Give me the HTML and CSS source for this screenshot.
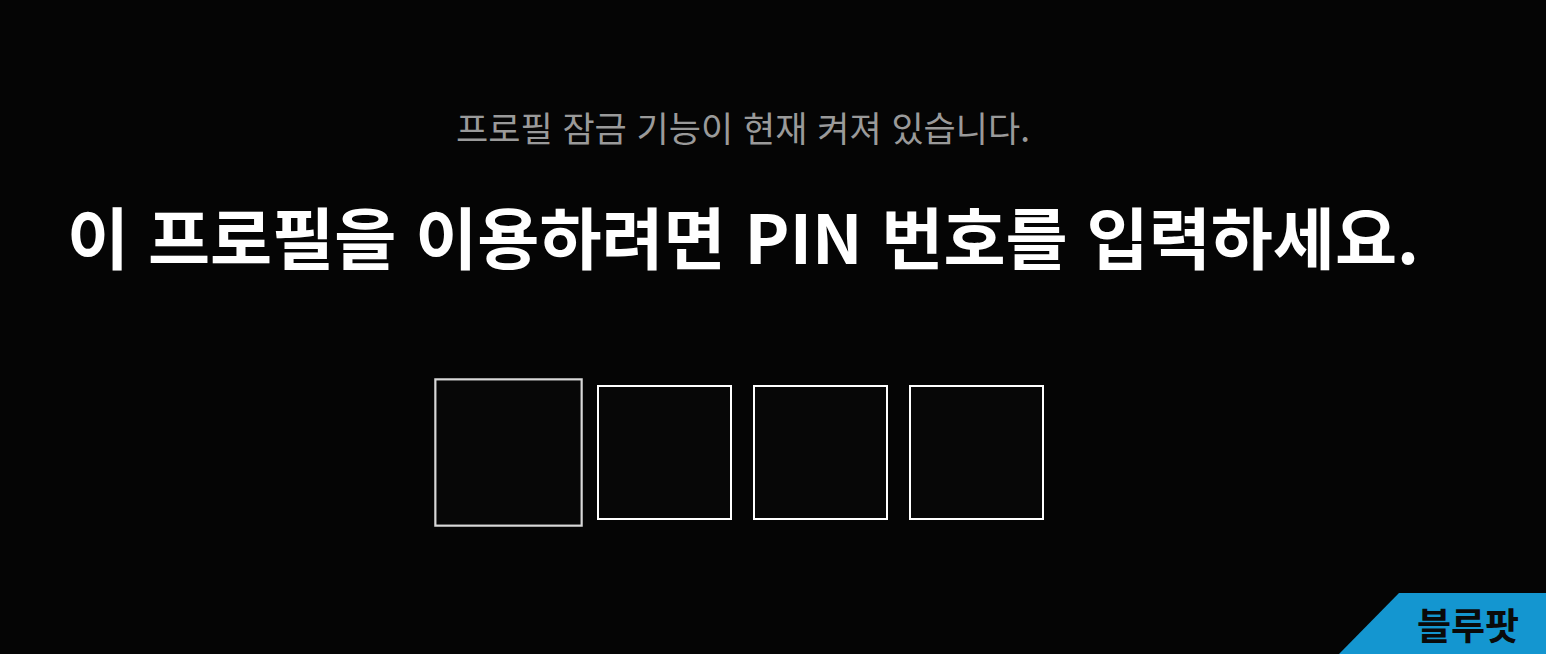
FILE: index.html
```html
<!DOCTYPE html>
<html lang="ko">
<head>
<meta charset="utf-8">
<link rel="stylesheet" href="styles.css">
</head>
<body>
<main class="page">
  <div class="lock">
    <p class="status">프로필 잠금 기능이 현재 켜져 있습니다.</p>
    <h1 class="title">이 프로필을 이용하려면 PIN 번호를 입력하세요.</h1>
    <div class="pins">
      <div class="pin focused"></div>
      <div class="pin"></div>
      <div class="pin"></div>
      <div class="pin"></div>
    </div>
  </div>
</main>
<div class="badge"><span class="badge-text">블루팟</span></div>
</body>
</html>
```

FILE: styles.css
```css
html, body {
  margin: 0;
  padding: 0;
  background: #050505;
  width: 1546px;
  height: 654px;
  overflow: hidden;
  font-family: "Noto Sans CJK KR", "Noto Sans", sans-serif;
}
.page {
  width: 1546px;
  height: 654px;
  box-sizing: border-box;
  padding-right: 60px;
  display: flex;
  justify-content: center;
}
.lock {
  display: flex;
  flex-direction: column;
  align-items: center;
  padding-top: 99px;
}
.status {
  margin: 0;
  color: #9a9a9a;
  font-size: 35px;
  font-weight: 400;
  line-height: 56px;
  white-space: nowrap;
}
.title {
  margin: 35px 0 0;
  color: #ffffff;
  font-size: 67.5px;
  font-weight: 700;
  line-height: 90px;
  white-space: nowrap;
}
.pins {
  margin-top: 105px;
  display: flex;
  gap: 21px;
}
.pin {
  width: 135px;
  height: 135px;
  box-sizing: border-box;
  border: 2px solid #ffffff;
  background: #070707;
}
.pin.focused {
  transform: scale(1.1);
  border-color: #d8d8d8;
}
.badge {
  position: absolute;
  right: 0;
  bottom: 0;
  width: 207px;
  height: 61px;
  background: #1496d0;
  clip-path: polygon(60px 0, 100% 0, 100% 100%, 0 100%);
  display: flex;
  align-items: center;
  justify-content: flex-end;
  padding-right: 27px;
  box-sizing: border-box;
}
.badge-text {
  color: #0a0a0a;
  font-size: 37px;
  font-weight: 700;
}
```
